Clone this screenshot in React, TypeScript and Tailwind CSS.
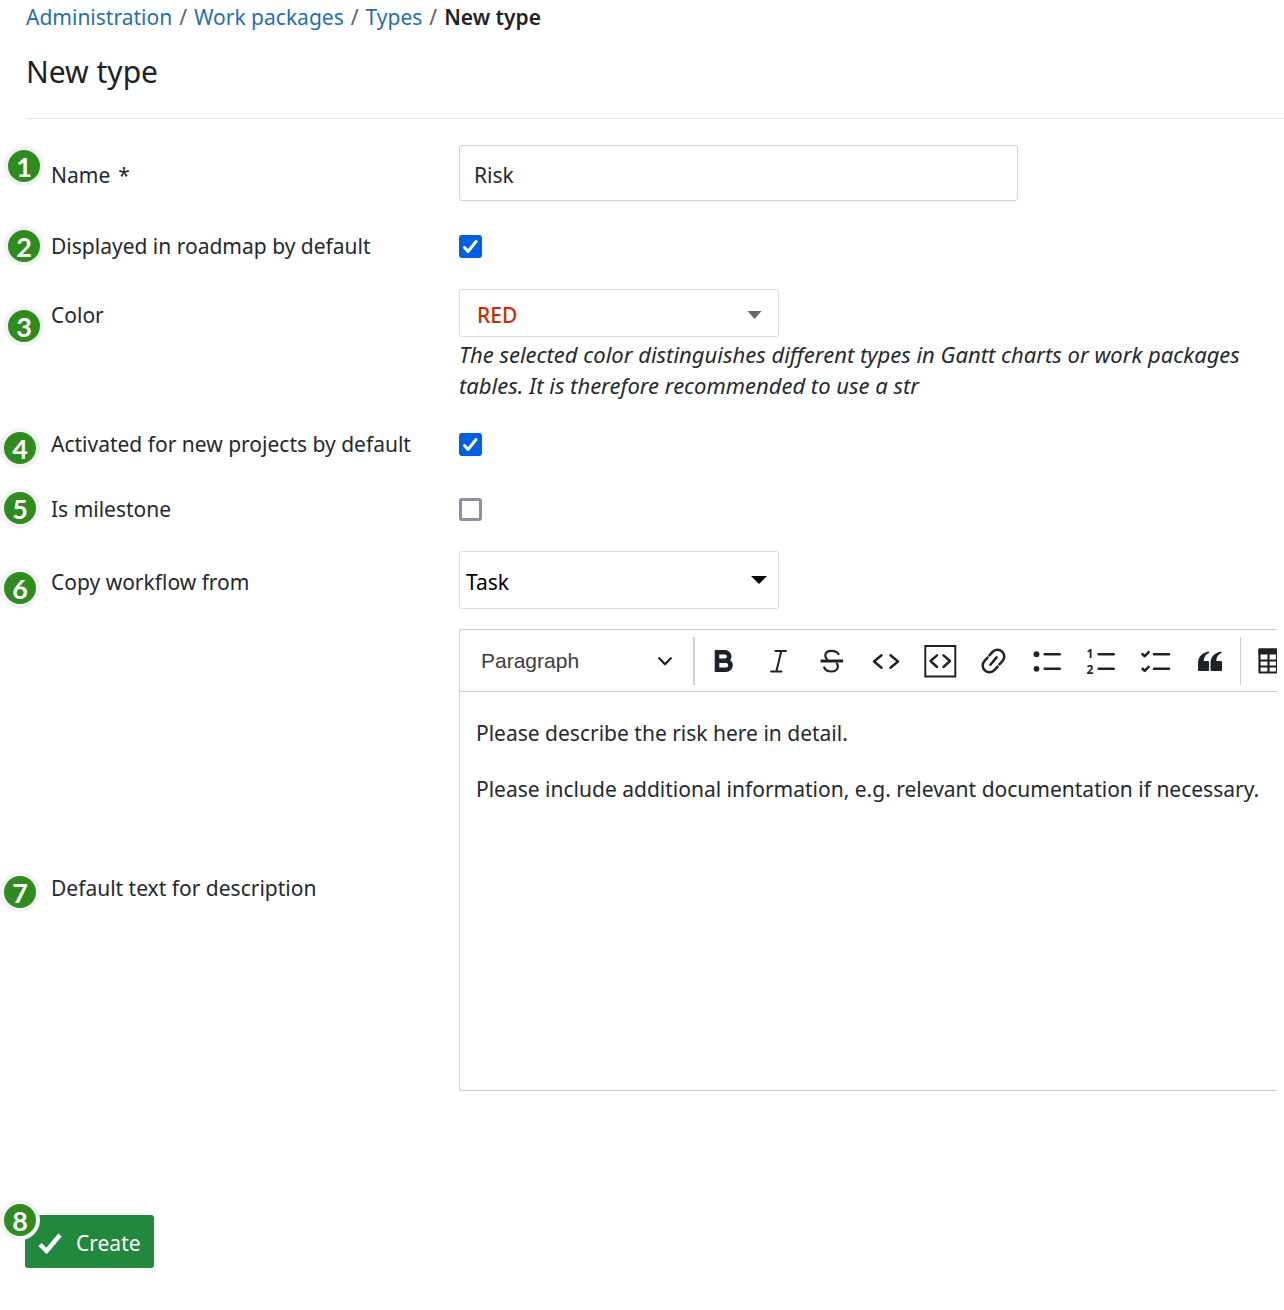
import type { ReactNode } from "react";

function Badge({ n, className }: { n: number; className: string }) {
  return (
    <span
      aria-hidden="true"
      className={`absolute flex size-10 items-center justify-center rounded-full border-4 border-[#f2f2f2] bg-[#2f8a1f] font-['Lato',sans-serif] text-[27px] leading-none font-bold text-white ${className}`}
    >
      {n}
    </span>
  );
}

function Row({
  n,
  badge,
  id,
  label,
  labelClass,
  children,
}: {
  n: number;
  badge: string;
  id: string;
  label: ReactNode;
  labelClass: string;
  children: ReactNode;
}) {
  return (
    <div className="relative grid grid-cols-[408px_minmax(0,1fr)] pl-[51px]">
      <Badge n={n} className={badge} />
      <label htmlFor={id} className={`flex items-center gap-2 ${labelClass}`}>
        {label}
      </label>
      {children}
    </div>
  );
}

function Checkbox({ id, checked = false, className }: { id: string; checked?: boolean; className: string }) {
  return (
    <div className={`flex items-center ${className}`}>
      <span className="grid size-[23px]">
        <input
          id={id}
          type="checkbox"
          defaultChecked={checked}
          className="peer col-start-1 row-start-1 size-[23px] appearance-none rounded-[3px] border-3 border-[#8f8f9d] bg-white checked:border-[#0060df] checked:bg-[#0060df]"
        />
        <svg
          viewBox="0 0 23 23"
          className="pointer-events-none invisible col-start-1 row-start-1 size-[23px] peer-checked:visible"
          fill="none"
          stroke="white"
          strokeWidth="3"
          strokeLinecap="round"
          strokeLinejoin="round"
        >
          <path d="M5.500 12.500 9 16.500 17 6.500" />
        </svg>
      </span>
    </div>
  );
}

function Tool({ label, children }: { label: string; children: ReactNode }) {
  return (
    <button type="button" aria-label={label} className="flex h-12 w-[54px] shrink-0 items-center justify-center text-[#1f2328]">
      <svg viewBox="0 0 36 36" className="size-9" fill="none" stroke="currentColor" strokeWidth="2.200" strokeLinecap="round" strokeLinejoin="round">
        {children}
      </svg>
    </button>
  );
}

export default function App() {
  return (
    <main className="overflow-hidden bg-white pb-[42px] font-['Noto_Sans',sans-serif] text-[21px] leading-[31px] text-[#24292f]">
      <header className="pl-[26px]">
        <nav aria-label="Breadcrumb" className="pt-[2px]">
          <ol className="flex gap-[7px] text-[#57606a]">
            <li className="flex gap-[7px]"><a href="#administration" className="text-[#1f6fb0]">Administration</a>/</li>
            <li className="flex gap-[7px]"><a href="#work-packages" className="text-[#1f6fb0]">Work packages</a>/</li>
            <li className="flex gap-[7px]"><a href="#types" className="text-[#1f6fb0]">Types</a>/</li>
            <li aria-current="page" className="font-semibold text-[#1f2328]">New type</li>
          </ol>
        </nav>
        <h1 className="border-b border-[#dfe5ea] pt-[18px] pb-[26px] text-[30px] leading-[41px] text-[#1f2328]">New type</h1>
      </header>

      <form className="pt-[26px]" onSubmit={(e) => e.preventDefault()}>
        <div className="flex flex-col gap-5 pr-[7px]">
          <Row n={1} badge="left-1 top-px" id="name" label={<><span>Name</span><span>*</span></>} labelClass="h-14 pt-1">
            <input
              id="name"
              type="text"
              defaultValue="Risk"
              className="h-14 w-full max-w-[559px] rounded-[3px] border border-[#ccd3da] px-[14px] pt-1"
            />
          </Row>

          <Row n={2} badge="left-1 top-[5px]" id="roadmap" label="Displayed in roadmap by default" labelClass="h-12 pt-[2px]">
            <Checkbox id="roadmap" checked className="h-12 pt-[2px]" />
          </Row>

          <Row n={3} badge="left-1 top-[17px]" id="color" label="Color" labelClass="h-12 pt-1">
            <div>
              <div className="relative w-[320px]">
                <select
                  id="color"
                  className="block h-12 w-full appearance-none rounded-[3px] border border-[#d8dee4] bg-white px-[17px] pt-1 font-medium text-[#cc2b00]"
                >
                  <option>RED</option>
                </select>
                <svg viewBox="0 0 14 8" className="pointer-events-none absolute top-[22px] right-[17px] h-2 w-[15px]" fill="#636c76">
                  <path d="M0 0h14L7 8z" />
                </svg>
              </div>
              <p className="pt-[2px] text-[22px] italic">
                The selected color distinguishes different types in Gantt charts or work packages tables. It is therefore
                recommended to use a str
              </p>
            </div>
          </Row>

          <Row n={4} badge="left-0 top-[7px]" id="activated" label="Activated for new projects by default" labelClass="h-[46px]">
            <Checkbox id="activated" checked className="h-[46px]" />
          </Row>

          <Row n={5} badge="left-0 top-px" id="milestone" label="Is milestone" labelClass="h-11">
            <Checkbox id="milestone" className="h-11" />
          </Row>

          <Row n={6} badge="left-0 top-[17px]" id="workflow" label="Copy workflow from" labelClass="h-[58px] pt-1">
            <div className="relative w-[320px]">
              <select
                id="workflow"
                className="block h-[58px] w-full appearance-none rounded-[3px] border border-[#d8dee4] bg-white px-[6px] pt-1 text-black"
              >
                <option>Task</option>
              </select>
              <svg viewBox="0 0 16 8" className="pointer-events-none absolute top-[25px] right-3 h-2 w-4" fill="#000">
                <path d="M0 0h16L8 8z" />
              </svg>
            </div>
          </Row>

          <Row n={7} badge="left-0 top-[243px]" id="description" label="Default text for description" labelClass="pt-14">
            <div className="overflow-hidden rounded-l-[3px] border border-r-0 border-[#ccced1]">
              <div role="toolbar" aria-label="Formatting" className="flex h-[62px] items-center border-b border-[#ccced1]">
                <div className="relative w-[233px] shrink-0">
                  <select
                    aria-label="Heading"
                    className="block h-12 w-full appearance-none bg-transparent px-[21px] font-['Liberation_Sans',sans-serif] text-[21px] text-[#3d3d3d]"
                  >
                    <option>Paragraph</option>
                  </select>
                  <svg viewBox="0 0 14 9" className="pointer-events-none absolute top-5 right-[21px] h-[9px] w-[14px]" fill="none" stroke="#1f2328" strokeWidth="2.200" strokeLinecap="round" strokeLinejoin="round">
                    <path d="M1.200 1.200 7 7.200l5.800-6" />
                  </svg>
                </div>
                <span className="mr-[2px] h-12 w-[2px] shrink-0 bg-[#ccced1]" />
                <Tool label="Bold">
                  <path strokeWidth="4.600" strokeLinejoin="miter" d="M11 9.300h8a4.200 4.200 0 0 1 0 8.400h-8zM11 17.700h9a4.500 4.500 0 0 1 0 9h-9z" />
                </Tool>
                <Tool label="Italic">
                  <path strokeWidth="2" d="M15.500 8h10.500M11 28.500h10.500M21.300 8l-5 20.500" />
                </Tool>
                <Tool label="Strikethrough">
                  <path d="M24.500 11c-1.500-2.200-4-3.200-6.800-3.200-4 0-6.400 2-6.400 4.800 0 1.500.6 2.600 1.700 3.600M10.200 24.500c1.200 2.600 3.700 4 7 4 4 0 6.700-2 6.700-5 0-1.200-.4-2.200-1-2.900" />
                  <path strokeWidth="3" strokeLinecap="butt" d="M6.500 18h22.600" />
                </Tool>
                <Tool label="Code">
                  <path strokeWidth="2.500" d="M13.500 12.300 6 18.500l7.500 6.300M22.500 12.300l7.500 6.200-7.500 6.300" />
                </Tool>
                <Tool label="Code block">
                  <path strokeWidth="2" strokeLinejoin="miter" d="M3.300 3h30v30.500h-30z" />
                  <path strokeWidth="2.400" d="M15 12.300 8.500 18l6.500 6M21.500 12.300 28 18l-6.500 6" />
                </Tool>
                <Tool label="Link">
                  <path strokeWidth="2.500" d="M13.400 12.400l3.200-3.600a6.600 6.600 0 0 1 9.800 9.300l-3 3.300M21.600 23.600l-3.200 3.600a6.600 6.600 0 0 1-9.800-9.300l3-3.300M14.400 21.800l6.200-7.400" />
                </Tool>
                <Tool label="Bulleted list">
                  <circle cx="6.500" cy="11.200" r="2.900" fill="currentColor" stroke="none" />
                  <circle cx="6.500" cy="25.800" r="2.900" fill="currentColor" stroke="none" />
                  <path strokeWidth="2.600" d="M14.700 11.200h15M14.700 25.800h15" />
                </Tool>
                <Tool label="Numbered list">
                  <text x="2.500" y="14.500" fontSize="12" fontWeight="700" fontFamily="Noto Sans, sans-serif" fill="currentColor" stroke="none">1</text>
                  <text x="2.500" y="31" fontSize="12" fontWeight="700" fontFamily="Noto Sans, sans-serif" fill="currentColor" stroke="none">2</text>
                  <path strokeWidth="2.600" d="M14.700 11.200h15M14.700 25.800h15" />
                </Tool>
                <Tool label="To-do list">
                  <path strokeWidth="2.600" d="M16 11.200h15M16 25.800h15M4.500 11.200l2.200 2 4-4M4.500 25.800l2.200 2 4-4" />
                </Tool>
                <Tool label="Block quote">
                  <path
                    fill="currentColor"
                    stroke="none"
                    d="M17 8.500C10 9.500 6 14 6 20.500V27a1 1 0 0 0 1 1h9a1 1 0 0 0 1-1v-8a1 1 0 0 0-1-1h-4.300c.2-4 2-6.800 5.300-8zM29.500 8.500c-7 1-11 5.500-11 12V27a1 1 0 0 0 1 1h9.500a1 1 0 0 0 1-1v-8a1 1 0 0 0-1-1h-4.800c.2-4 2-6.800 5.300-8z"
                  />
                </Tool>
                <span className="mx-[3px] h-12 w-px shrink-0 bg-[#ccced1]" />
                <Tool label="Insert table">
                  <path strokeWidth="2.200" d="M6.500 6.500h26v23h-26zM15.500 12v17.500M24 12v17.500M6.500 17.500h26M6.500 23.500h26" />
                  <path fill="currentColor" d="M6.500 6.500h26v4h-26z" />
                </Tool>
              </div>
              <textarea
                id="description"
                className="block h-[398px] w-full resize-none pt-[27px] pl-4 leading-7"
                defaultValue={
                  "Please describe the risk here in detail.\n\nPlease include additional information, e.g. relevant documentation if necessary."
                }
              />
            </div>
          </Row>
        </div>

        <div className="relative mt-[124px] pl-[25px]">
          <button type="submit" className="flex h-[53px] items-center gap-[14px] rounded-[3px] bg-[#22883e] px-[13px] pt-1 text-white">
            <svg viewBox="0 0 24 21" className="h-[21px] w-6" fill="none" stroke="white" strokeWidth="4.500">
              <path d="M2 11.500l6.500 6.500L22 2" />
            </svg>
            Create
          </button>
          <Badge n={8} className="-top-[15px] left-0" />
        </div>
      </form>
    </main>
  );
}
